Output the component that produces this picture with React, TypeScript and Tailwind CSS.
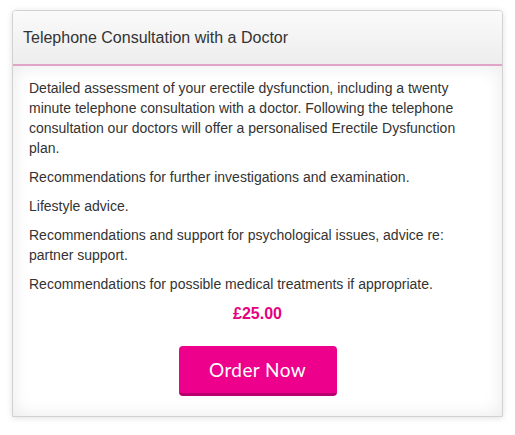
import React from "react";

export default function App() {
  const paras: string[] = [
    "Detailed assessment of your erectile dysfunction, including a twenty minute telephone consultation with a doctor. Following the telephone consultation our doctors will offer a personalised Erectile Dysfunction plan.",
    "Recommendations for further investigations and examination.",
    "Lifestyle advice.",
    "Recommendations and support for psychological issues, advice re: partner support.",
    "Recommendations for possible medical treatments if appropriate.",
  ];
  return (
    <div className="w-[515px] h-[435px] bg-white pt-[10px] pl-[12px] font-['Liberation_Sans',Arial,sans-serif]">
      <div className="w-[491px] h-[407px] border border-[#d2d2d2] rounded-t-[4px] bg-white shadow-[0_1px_6px_rgba(0,0,0,0.12)] overflow-hidden flex flex-col">
        <div className="h-[55px] shrink-0 bg-gradient-to-b from-[#fafafa] to-[#ededed] border-b-2 border-[#e2a3c8] flex items-center pl-[10px] pt-[1px] text-[16px] text-[#333]">
          Telephone Consultation with a Doctor
        </div>
        <div className="flex-1 shadow-[inset_0_0_18px_rgba(0,0,0,0.09)] pt-[12px] px-[16px] text-[14px] leading-[20px] text-[#333]">
          {paras.map((p, i) => (
            <p key={i} className="mb-[9px]">
              {p}
            </p>
          ))}
          <div className="text-center text-[16px] leading-[22px] font-bold text-[#e6007e]">£25.00</div>
          <div className="flex justify-center mt-[21px]">
            <button className="w-[158px] h-[50px] bg-[#ec008c] border-b-[3px] border-[#b8006f] rounded-[4px] text-white text-[19px] font-['Lato',sans-serif] tracking-[0.4px]">
              Order Now
            </button>
          </div>
        </div>
      </div>
    </div>
  );
}
